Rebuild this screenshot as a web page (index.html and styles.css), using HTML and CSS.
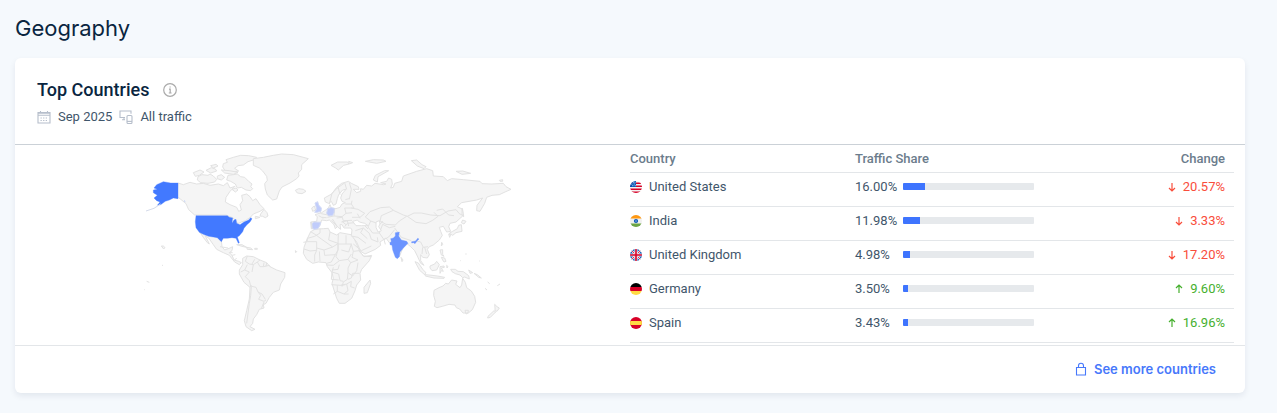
FILE: index.html
```html
<!DOCTYPE html>
<html lang="en">
<head>
<meta charset="utf-8">
<meta name="viewport" content="width=device-width, initial-scale=1">
<title>Geography</title>
<link rel="stylesheet" href="styles.css">
</head>
<body>
<main class="page">
<h1 class="page-title">Geography</h1>
<section class="card">
<header class="card-header">
<div class="title-row">
<h2 class="card-title">Top Countries</h2>
<svg class="info" viewBox="0 0 14 14" role="img" aria-label="Information"><circle cx="7" cy="7" r="6.3"/><path d="M6 6.2h1.2v3.6M5.8 10h2.8M6.5 4h1.2"/></svg>
</div>
<div class="meta">
<svg class="meta-icon" viewBox="0 0 14 14" aria-hidden="true"><path d="M1 2.5h12v10.5H1zM1 5.2h12M1 3.2h12M3.5 1v2M10.5 1v2"/><path d="M3.5 8h7.5M3.5 10.5h7.5" stroke-dasharray="1.3 1.3"/></svg>
<span class="meta-text">Sep 2025</span>
<svg class="meta-icon" viewBox="0 0 14 14" aria-hidden="true"><path d="M12 3.8V1H1v6.5h5M3 9.8h3M5 7.5v2.3"/><rect x="8" y="5.5" width="5" height="8" rx="1"/><path d="M8 11.4h5"/></svg>
<span class="meta-text">All traffic</span>
</div>
</header>
<div class="card-body">
<div class="map-wrap">
<svg class="map" viewBox="0 0 1140 570" role="img" aria-label="Traffic share by country">
<g class="land">
<!-- North America -->
<path d="M114 105l16 5 20-7 20 5 20-2 20 6 25-4 15 5 12-9 8 16 15-5-15 15-12 18-2 14 14 8 20 8 6 12 8-4-4-16 8-12-3-16 15-4 10 8 8 12 10-6 12 18 12 12-12 8-20 8-9 10-15 10-12 4-8 4-10-6-6-10-22-9h-94l-18-16-8-18-12-10-10-8-6 2z"/>
<path d="M178 250l12 6 16 6 14 2 12 2 12 12 2 18 8 10 16-6 8-4-2 12-8 6 8 8 6 14 14 4 8 4-6 6-14-8-16-20-18-8-20-10-10-14-14-20-10-6 12 24-6-4-12-16z"/>
<path d="M264 82l16-2 12-2 10 8 12 2 12 12 10 8-4 8 6 6-6 6-14-2-14-8-12 2-6-12-14-8-12-4z"/>
<path d="M250 47l12-4-4-8 22-7 22-6 24 1 24 5-10 8-16 5-14 10-16 2-10 8 12 8-24 4-16-4-8-12z"/>
<path d="M174 86l12-6 18 2 6-4 10 6 10 10-6 8-20 4-22-2-10-8zM160 74l20-8 12 6-14 10-12 3zM198 67l16-8 12 4 4 6-18 6zM232 84l12-4 10 8-10 8-12-4zM212 53l16-4 6 5-14 6zM244 66l24 2 26 5-14 6-26-4zM276 124l12-4 6 6-8 6zM362 198l10-14 9 10 3 10-8 5-8-4-8-1zM346 205l14 3-14 4z"/>
<path d="M340 32l30-4 30-6 25-4 35 2 45 12-20 18 0 14-10 11 2 9-7 8-20 13-24 12-8 12-8 24-12 3-16-15-6-18-2-16 8-10-2-12-12-16-10-9-18-8z"/>
<path d="M466 127l10-5 14 2 8 6-12 7-14-2z"/>
<path d="M290 290l16 0 14 8-14-3zM320 298l12 2 6 5-16-1zM344 301h8v3h-8z"/>
<path d="M64 294l6 0 5 5-4 4zM66 352h3M20 400l8 3M13 425h2"/>
<!-- South America -->
<path d="M308 331l12-7 20 2 20 10 20 8 10 12 20 10 25 8-1 14-12 20-4 18-18 7-12 15-10 18-8 4 2 10-14 4-8 16-10 13-2 13-8 10 15 8-10 4-17-12-5-18 7-30 8-35 2-35-18-15-14-25v-12l10-16z"/>
<!-- Africa -->
<path d="M512 251l13-7 25-2 15-1 5 11 20 9 10-7 38 7 7 17 15 33 12 15 23-4-7 16-23 26-5 12 2 20-12 15-5 17-10 23-20 15-17 0-8-15-8-25-6-20 4-15-4-17-14-18-4-12-23-2-17 4-18-12-10-18 2-18 8-22zM690 396l2 10-10 28-10 2v-18zM466 308l4 3-3 3z"/>
<!-- Eurasia -->
<path d="M553 150L575 138 590 118 605 106 625 100 634 106 655 116 657 124 640 124 650 134 662 130 662 122 670 124 680 112 695 114 705 106 730 110 738 108 722 104 740 100 746 90 755 94 757 108 752 120 760 118 764 106 785 100 790 84 830 70 860 62 878 68 880 84 910 86 922 98 935 92 970 95 1020 100 1026 107 1055 108 1090 106 1098 116 1113 124 1095 132 1078 140 1056 142 1040 148 1034 166 1020 190 1010 188 1011 172 1028 150 1010 156 965 164 952 176 968 184 968 204 948 222 930 226 926 236 932 250 920 252 910 235 898 238 902 250 907 262 898 276 880 291 868 296 862 304 868 320 862 330 848 328 842 320 842 338 852 352 842 346 832 324 824 308 812 296 800 286 788 302 778 326 768 318 756 284 748 284 738 270 720 282 722 292 706 304 675 318 662 310 650 282 634 262 636 246 632 240 612 240 606 230 600 230 602 244 592 236 578 214 576 218 592 236 586 242 582 230 568 216 560 218 545 216 540 232 530 243 514 242 512 222 530 220 532 206 525 200 545 194 560 184 566 178 570 170 574 180 588 182 600 178 606 168 616 164 606 160 602 150 606 138 618 124 608 126 596 140 592 152 588 168 580 172 574 160 566 166 556 162z"/>
<path d="M515 180l8-6 4 12-9 4z"/>
<path d="M573 52l20-10 30 0 4 6-16 4-16 14-8-6zM626 40l12 4-10 4zM676 40l24-5 30 1 8 4-28 6zM700 96l6-14 28-14 12 0-32 18-2 16zM814 38l16-2 16 14 12 6-6 6-20-8zM948 70l20-1 24 7-26 3zM1078 97l10-2v5h-8z"/>
<!-- East Asian islands -->
<path d="M966 180l4 16 1 10-5-4zM968 216l10 4-6 8-8-4zM964 230l2 20-18 4-10 8-10-6 10-6 14-8 4-10zM926 258l6 2-3 8zM905 283l3 6-4 5zM783 328l6 8-3 5z"/>
<!-- South-east Asia and Oceania -->
<path d="M825 341l10 4 14 20 8 8-2 8-16-14zM856 380l20 2 16 2 22 4-2 3-30-1-26-6zM870 354l14-6 6-8 8 10-8 16-14 2-6-8zM900 306l8-1 0 14 4 6-8-4zM904 328l10 2 4 10-6 2-4-6zM900 356l12-2 1 4-9 2 6 10-6-2-4 8zM920 352l4 4-3 4zM932 364l14 0 8 6 16 1 16 12 2 10-14-6-6 2-8-8-14-4-10-6zM986 366l12 8-8 2zM1002 376l10 4 12 10-8-2z"/>
<path d="M882 427l15-8 12-5 8-8 8 2 10-12 16 3-4 10 13 10 5-8 3-20 8 12 4 16 14 10 10 16 3 18-10 22-12 10-16 0-10-12-10-4-4-8-18-2-20 6-16 4-8-4 3-15-5-18zM975 487l10 0-1 8-6 3zM1064 469l7 7 7 4-7 10-6-2 0-8zM1062 488l5 4-16 16-8 2 1-5zM1043 402l6 5M1035 421l6 5M1072 413l8-5M960 338h2M976 318h4M1018 339h2"/>
</g>
<g class="borders">
<path d="M240 296l24 4M268 314l10 0M276 322l10-2M284 336l6-6M322 324l-6 16 12 8 12 2-4 22M340 350l12-8 8-6M352 342l8 14 10 0 2-12M370 356l18-4 2 4M380 345l-2 10M302 372l12-6 8-16M314 366l14 6-12 14 12 12 4 16 16 4 6 14 12 6 10 16M334 416l-2 26-4 24-8 60M354 432l8 10-6 12 16 6 6-4M372 462l-8 20M344 334l-8 14M334 412l-4 6"/>
<path d="M512 251l16 10 16 12M540 241l0 14-16 10-22 6M502 271v10l-12 2M544 273l34 24 16-10M570 252l-4 24 28 10 0 18M595 258l-1 30 42 0M618 262v26M502 281l28 0 0 26-20 2-18-6M530 300l22 6 26-9M530 307l-6 14 0 20M538 310l2 30M552 306l2 16 32-2 8-14M586 320l-12 22-14 4M594 304l-6 22 10 12-18 14-20-1M594 286v20M598 338l26-4 10-16M604 306l22 6 8-24M634 290l6 20-4 18 18 8M640 310l18-2 12 16 24 2M658 308l4 8M624 334l8 10 22-8M632 344l-8 16 0 14 14 10M654 344l-4 24-12 16M598 350l-4 14-18 2M624 374l-2 20-12 8-4 14M580 358l-4 14 20 6 4 20 10 2M576 372l-2 22 22 2M574 410l28 2 14-2M592 412v18l-12 8M602 412l18-4 14-8M592 430l20 8 12-10-4-20M612 438l14 0M624 394l10-4 4-14 20 0M634 400l-2 16 12 4"/>
<path d="M568 168l8-32 16-16 20-14M594 116l6 24M614 104l6 20M628 104l6 20-6 30M616 155l14-4M636 158l-2 10-18 0M634 168l8 12-28 0M634 180l20 4 20 12-14 12-24 0M584 182l-2 22-20 4M582 204l24 2 12-10 18-2M606 206l4 12 26-1M618 196l-4-16M590 210l16-2M604 222l20-4M614 236l8-10 22-2M622 218l4 16M606 220l12 10M652 197l8 14M536 203l14 8M541 221l-2 8M534 185l10 12 20 4M546 208l14 1"/>
<path d="M676 207l14-16 32-12 26-2 12 10 30 14 12 4 20-10 22 0 28 6 28 2 24-14 24-4 10 12 12 6M802 205l26 18 30 4 20-10 16-12-12-12M890 187l18-4 18 18 16 2M760 187l-36 16-4 16 18 10 28 2 12-12 22-14M676 207l16 12 28 10 8-10M692 219l-8 18 14 18 20 0 10-26M728 229l20 10 18-4M648 233l22-4 14 14M646 248l24-8 18 16 6 18 20 8M670 240l-8 14 20 18M634 264l20 4 24 18M640 288l24 20 30-14M718 255l14 20 14-8 18-22M714 282l-2-14M732 275l4 14M764 240l20 28 30 10M826 278l16 4 8 16 14-2M848 298l-2 20M854 298l6 20"/>
</g>
<g class="water">
<path d="M638 220l14-4 6 6 16 4 10 7-20 0-16 0zM708 222l10-4 2 10-4 8 8 12-10 4-6-14z"/>
</g>
<path class="us" d="M114 105v47l-14-2-12 6-12 4-14 10-10 2 8-10-10-4-8-8 10-8-12-8 0-8 12-2-10-4 8-10 20-9 22 4z"/>
<path class="tail" d="M62 168l-20 13-24 8"/>
<path class="us" d="M168 203h94l6 5 10 2-2 16 6-10 6-2 2 12 10 4 12-8 14-6 6-7 4 3-6 10-10 9-8 10-4 10-10 12-6 4 6 17-3 2-7-15-12-2-14 2-12 0-6 10-12-12-12-2-14-2-16-6-12-6-10-14-2-18zM132 158l4 3"/>
<path class="india" d="M766 254L778 252 776 264 784 276 800 280 804 286 790 300 780 312 778 326 772 332 766 328 758 306 756 292 750 290 750 284 754 280 752 272 760 270 766 264zM815 281l12-2 6-8 4 2-6 6-6 8-4-3-6 1z"/>
<path class="faint" d="M525 165l8-4 3 10 8 9-1 10-11 3-8 0 6-10zM563 182l10-3 10 2-1 13-4 8-12 2-6-8zM522 222l20 1-3 10-5 9-12 2-6-5 0-12z"/>
<path class="portugal" d="M514 222l2 20"/>
</svg>
</div>
<div class="table-wrap">
<table class="countries">
<thead><tr><th class="col-country" scope="col">Country</th><th scope="col">Traffic Share</th><th class="col-change" scope="col">Change</th></tr></thead>
<tbody>
<tr><td><div class="cell"><svg class="flag" viewBox="0 0 12 12" aria-hidden="true"><path fill="#f3f3f3" d="M0 0h12v12H0z"/><path stroke="#d80027" stroke-width="1.5" d="M0 2.2h12M0 5.2h12M0 8.2h12M0 11.2h12"/><path fill="#0052b4" d="M0 0h6v6H0z"/><path stroke="#fff" stroke-width=".7" stroke-dasharray=".8 .8" d="M1 3h5M2 4.7h4M3 1.6h3"/></svg>United States</div></td><td><div class="cell"><span class="share">16.00%</span><span class="bar"><span class="fill" style="width:16.8%"></span></span></div></td><td class="col-change down"><svg class="arrow" viewBox="0 0 8 10" aria-hidden="true"><path d="M4 1v8M1 6l3 3 3-3"/></svg>20.57%</td></tr>
<tr><td><div class="cell"><svg class="flag" viewBox="0 0 12 12" aria-hidden="true"><path fill="#f0f0f0" d="M0 0h12v12H0z"/><path fill="#ff9811" d="M0 0h12v3.6H0z"/><path fill="#6da544" d="M0 8.4h12V12H0z"/><circle cx="6" cy="6" r="2.1" fill="#0052b4"/><circle cx="6" cy="6" r="1.2" fill="#7aa5d8"/><circle cx="6" cy="6" r=".7" fill="#0052b4"/></svg>India</div></td><td><div class="cell"><span class="share">11.98%</span><span class="bar"><span class="fill" style="width:13%"></span></span></div></td><td class="col-change down"><svg class="arrow" viewBox="0 0 8 10" aria-hidden="true"><path d="M4 1v8M1 6l3 3 3-3"/></svg>3.33%</td></tr>
<tr><td><div class="cell"><svg class="flag" viewBox="0 0 12 12" aria-hidden="true"><path fill="#0052b4" d="M0 0h12v12H0z"/><path stroke="#f0f0f0" stroke-width="2.2" d="M0 0l12 12M12 0L0 12"/><path stroke="#d80027" stroke-width=".8" d="M0 0l12 12M12 0L0 12"/><path stroke="#f0f0f0" stroke-width="3.2" d="M6 0v12M0 6h12"/><path stroke="#d80027" stroke-width="1.6" d="M6 0v12M0 6h12"/></svg>United Kingdom</div></td><td><div class="cell"><span class="share">4.98%</span><span class="bar"><span class="fill" style="width:5.3%"></span></span></div></td><td class="col-change down"><svg class="arrow" viewBox="0 0 8 10" aria-hidden="true"><path d="M4 1v8M1 6l3 3 3-3"/></svg>17.20%</td></tr>
<tr><td><div class="cell"><svg class="flag" viewBox="0 0 12 12" aria-hidden="true"><path d="M0 0h12v4H0z"/><path fill="#d80027" d="M0 4h12v4H0z"/><path fill="#ffda44" d="M0 8h12v4H0z"/></svg>Germany</div></td><td><div class="cell"><span class="share">3.50%</span><span class="bar"><span class="fill" style="width:3.8%"></span></span></div></td><td class="col-change up"><svg class="arrow" viewBox="0 0 8 10" aria-hidden="true"><path d="M4 9V1M1 4l3-3 3 3"/></svg>9.60%</td></tr>
<tr><td><div class="cell"><svg class="flag" viewBox="0 0 12 12" aria-hidden="true"><path fill="#d80027" d="M0 0h12v12H0z"/><path fill="#ffda44" d="M0 4h12v4H0z"/></svg>Spain</div></td><td><div class="cell"><span class="share">3.43%</span><span class="bar"><span class="fill" style="width:3.8%"></span></span></div></td><td class="col-change up"><svg class="arrow" viewBox="0 0 8 10" aria-hidden="true"><path d="M4 9V1M1 4l3-3 3 3"/></svg>16.96%</td></tr>
</tbody>
</table>
</div>
</div>
<footer class="card-footer">
<a class="more" href="#"><svg class="lock" viewBox="0 0 12 14" aria-hidden="true"><path d="M1.5 5.5h9v7.5h-9zM3.5 5.5V3.8a2.5 2.5 0 0 1 5 0v1.7"/></svg>See more countries</a>
</footer>
</section>
</main>
</body>
</html>
```
FILE: styles.css
```css
* { box-sizing: border-box; }
body {
  margin: 0;
  background: #f5f9fd;
  color: #3f566b;
  font: 13px/16px Roboto, "Liberation Sans", sans-serif;
}
.page { padding: 12px 32px 20px 15px; }
.page-title {
  margin: 0 0 14px;
  color: #092540;
  font: 400 22px/32px Inter, sans-serif;
}
.card {
  background: #fff;
  border-radius: 6px;
  box-shadow: 0 3px 6px rgba(14, 30, 62, .08);
}
.card-header {
  padding: 20px 22px 19px;
  border-bottom: 1px solid #cbd1d7;
}
.title-row { display: flex; align-items: center; gap: 14px; }
.card-title {
  margin: 0;
  color: #092540;
  font-size: 18px;
  font-weight: 500;
  line-height: 24px;
}
.info { width: 14px; height: 14px; fill: none; stroke: #aaa; stroke-width: 1.2; }
.meta { display: flex; align-items: center; gap: 7px; margin-top: 7px; }
.meta-icon { width: 14px; height: 14px; fill: none; stroke: #b6becb; stroke-width: 1.1; }
.card-body { display: grid; grid-template-columns: 1fr 1fr; }
.map-wrap { display: flex; justify-content: center; padding: 3px 0 0 14px; }
.map { width: 380px; height: 190px; }
.map path { stroke-width: 3; stroke-linejoin: round; }
.land path { fill: #f5f5f5; stroke: #e2e2e2; }
.borders path { fill: none; stroke: #e2e2e2; }
.water path { fill: #fff; stroke: #e2e2e2; }
.us { fill: #4279ff; stroke: #4279ff; }
.map .us { stroke-width: 1; }
.tail { fill: none; stroke: #d5dbea; }
.india { fill: #6b94ff; stroke: #6b94ff; }
.map .india { stroke-width: 1; }
.faint { fill: #c0ccfb; stroke: #d2daf5; }
.portugal { stroke: #e2e2e2; }
.table-wrap { padding: 0 11px 2px 0; }
.countries { width: 100%; border-collapse: separate; border-spacing: 0; table-layout: fixed; }
.countries th {
  height: 28px;
  padding: 0;
  border-bottom: 1px solid #e3e6e9;
  color: #6b7c8c;
  font-weight: 500;
  text-align: left;
}
.countries td {
  height: 34px;
  padding: 0 0 6px;
  border-bottom: 1px solid #e3e6e9;
}
.countries .col-country { width: 225px; }
.countries .col-change { width: 96px; padding-right: 9px; text-align: right; }
.cell { display: flex; align-items: center; }
.flag { width: 12px; height: 12px; margin-right: 7px; border-radius: 50%; }
.share { width: 48px; }
.bar { width: 131px; height: 7px; border-radius: 1px; background: #e6e9ec; overflow: hidden; }
.fill { display: block; height: 100%; background: #3e74fe; }
.down { color: #f94d3b; }
.up { color: #46b02e; }
.arrow { width: 8px; height: 10px; margin-right: 7px; vertical-align: -1px; fill: none; stroke: currentColor; stroke-width: 1.2; }
.card-footer {
  display: flex;
  justify-content: flex-end;
  padding: 15px 29px 16px;
  border-top: 1px solid #e3e6e9;
}
.more {
  display: flex;
  align-items: center;
  gap: 7px;
  color: #4778fb;
  font: 600 13px/16px Inter, sans-serif;
  text-decoration: none;
}
.lock { width: 12px; height: 14px; fill: none; stroke: currentColor; stroke-width: 1.1; }
```
